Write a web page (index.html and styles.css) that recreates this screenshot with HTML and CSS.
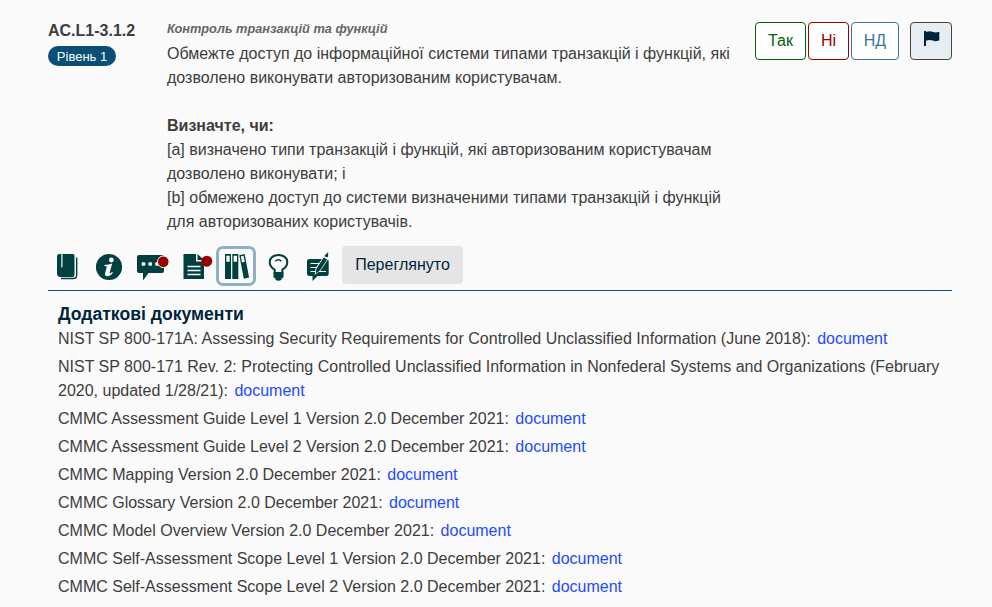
FILE: index.html
```html
<!DOCTYPE html>
<html lang="uk">
<head>
<meta charset="utf-8">
<title>AC.L1-3.1.2</title>
<link rel="stylesheet" href="styles.css">
</head>
<body>
<main class="question">
  <header class="top">
    <div class="ident">
      <div class="code">AC.L1-3.1.2</div>
      <span class="level">Рівень 1</span>
    </div>
    <div class="text">
      <div class="subtitle">Контроль транзакцій та функцій</div>
      <p>Обмежте доступ до інформаційної системи типами транзакцій і функцій, які<br>дозволено виконувати авторизованим користувачам.</p>
      <p class="determine"><b>Визначте, чи:</b><br>[a] визначено типи транзакцій і функцій, які авторизованим користувачам<br>дозволено виконувати; і<br>[b] обмежено доступ до системи визначеними типами транзакцій і функцій<br>для авторизованих користувачів.</p>
    </div>
    <div class="answers">
      <button class="answer yes">Так</button>
      <button class="answer no">Ні</button>
      <button class="answer na">НД</button>
      <button class="answer flag" aria-label="Позначити"><svg width="18" height="18" viewBox="0 0 18 18"><path d="M1 1h2v15H1zM3 2C5.500.8 8 1.200 10 2c2 .8 4 .5 6.300-.3v8.600c-2.500 1-4.500 1.100-6.500.3-2-.8-4.300-.8-6.800.1z"/></svg></button>
    </div>
  </header>

  <nav class="tools">
    <button class="tool"><svg viewBox="0 0 40 40"><path d="M11.500 8H13.300v14l1.200-1.200V8H25q1.500 0 1.500 1.500v19.500q0 2-2 2H12.500Q9 31 9 27.500v-17Q9 8 11.500 8z"/><path class="line" d="M28.700 11.500V29q0 3.500-3.500 3.500H13"/></svg></button>
    <button class="tool"><svg viewBox="0 0 40 40"><circle cx="19" cy="21" r="13.100"/><circle class="cut" cx="21.300" cy="14" r="2.400"/><path class="cut" d="M14.500 19q4-.3 7.700-1.500l-2.400 8.700q-.4 1.700.6 1.300.8-.4 1.700-1.700l.8.600q-2.500 4-5.700 3.800-2.900-.2-2.100-3.200l1.700-6.200q.2-.9-2.500-.9z"/></svg></button>
    <button class="tool"><svg viewBox="0 0 40 40"><path d="M7 9h23q2 0 2 2v14q0 2-2 2H16.500L11 34.500V27H7q-2 0-2-2V11q0-2 2-2z"/><g class="cut"><circle cx="11.500" cy="18" r="2"/><circle cx="18.200" cy="18" r="2"/><circle cx="25" cy="18" r="2"/></g><circle class="dot ring" cx="31.300" cy="15.800" r="5.800"/></svg></button>
    <button class="tool"><svg viewBox="0 0 40 40"><path d="M9.500 8H22v7.500h8V33H9.500zM23.500 8l6.500 6h-6.500z"/><path class="cutline" d="M13.500 20.500h13M13.500 24.500h13M13.500 28.500h13"/><circle class="dot" cx="32.800" cy="15.200" r="5.500"/></svg></button>
    <button class="tool active"><svg viewBox="0 0 40 40"><path d="M9 8h6v25H9zM16.300 8h6v25h-6zM23.300 9.200l5.300-1.300 4.500 23.600-5.300 1.300z"/><path class="cut" d="M10.300 9.800h3.400v6h-3.400zM17.600 9.800H21v6h-3.400zM24.800 10.500l2.800-.7 1.200 5.900-2.800.7z"/></svg></button>
    <button class="tool"><svg viewBox="0 0 40 40"><path class="bulb" d="M16.700 27.200v-3.500q-5-3-5-7.700c0-4.200 4-7.100 8.800-7.100s8.800 2.900 8.800 7.100q0 4.700-5 7.700v3.500z"/><path class="thin" d="M17.300 15.200q3-2.800 6.200 0"/><path d="M15.500 26h10v5.500l-2 1v1.200q-3 2.300-6 0v-1.200l-2-1z"/></svg></button>
    <button class="tool"><svg viewBox="0 0 40 40"><path d="M9.500 13h16.700q2.500 0 2.500 2.500v12q0 2.500-2.500 2.500H17.500L12.500 35v-5h-3Q7 30 7 27.500v-12Q7 13 9.500 13z"/><path class="textline" d="M10.500 17.500H22M10.500 21.500h10M10.500 25.500H26"/><path class="pencil-edge" d="M25 10 16.500 22l-.8 5 4.200-2.800L28 12z"/><path d="m23.800 11.500 3.300 2-7.400 11.200-4.100 2.800.9-5zM24.500 10.300l1.400-2.200 1-.4.600-1.300 1 .7-.6 1.200.3 1.600-1 1.700z"/></svg></button>
    <button class="viewed">Переглянуто</button>
  </nav>

  <section class="docs">
    <h2>Додаткові документи</h2>
    <ul>
      <li>NIST SP 800-171A: Assessing Security Requirements for Controlled Unclassified Information (June 2018): <a>document</a></li>
      <li>NIST SP 800-171 Rev. 2: Protecting Controlled Unclassified Information in Nonfederal Systems and Organizations (February 2020, updated 1/28/21): <a>document</a></li>
      <li>CMMC Assessment Guide Level 1 Version 2.0 December 2021: <a>document</a></li>
      <li>CMMC Assessment Guide Level 2 Version 2.0 December 2021: <a>document</a></li>
      <li>CMMC Mapping Version 2.0 December 2021: <a>document</a></li>
      <li>CMMC Glossary Version 2.0 December 2021: <a>document</a></li>
      <li>CMMC Model Overview Version 2.0 December 2021: <a>document</a></li>
      <li>CMMC Self-Assessment Scope Level 1 Version 2.0 December 2021: <a>document</a></li>
      <li>CMMC Self-Assessment Scope Level 2 Version 2.0 December 2021: <a>document</a></li>
    </ul>
  </section>
</main>
</body>
</html>
```
FILE: styles.css
```css
* { box-sizing: border-box; }
body {
  margin: 0;
  background: #fafafa;
  color: #3d3d3d;
  font: 16px/24px "Liberation Sans", Arial, sans-serif;
}
button { font: inherit; margin: 0; }
.question { padding: 18px 40px 0 48px; }
.top { display: flex; height: 228px; }
.ident { width: 119px; }
.code { height: 24px; font-weight: bold; line-height: 26px; }
.level {
  display: block;
  width: 68px;
  height: 20px;
  margin-top: 4px;
  border-radius: 10px;
  background: #0b4f75;
  color: #fff;
  font-size: 13px;
  line-height: 21px;
  text-align: center;
}
.text { width: 588px; white-space: nowrap; }
.subtitle {
  height: 24px;
  color: #666;
  font-size: 12.8px;
  font-style: italic;
  font-weight: bold;
  line-height: 21px;
}
p { margin: 0; }
.determine { margin-top: 24px; }
.answers { display: flex; align-items: flex-start; gap: 2px; padding-top: 4px; }
.answer {
  height: 38px;
  padding: 0;
  border: 1px solid;
  border-radius: 4px;
  background: #fff;
}
.yes { width: 51px; color: #006400; }
.no { width: 41px; color: #900; }
.na { width: 48px; color: #37779b; }
.flag {
  width: 42px;
  margin-left: 9px;
  padding: 0 0 0 12px;
  border-color: #444;
  background: #e7eef2;
  text-align: left;
}
.flag svg { display: block; fill: #002539; margin-bottom: 4px; }
.tools {
  display: flex;
  gap: 2px;
  height: 45px;
  border-bottom: 1px solid #0b4f75;
}
.tool {
  width: 40px;
  height: 40px;
  padding: 0;
  border: 0;
  border-radius: 7px;
  background: transparent;
}
.tool svg { display: block; width: 40px; height: 40px; fill: #00403f; }
.active { box-shadow: inset 0 0 0 3px #8fb1c3; }
.tool .cut { fill: #fafafa; }
.cutline { stroke: #fafafa; stroke-width: 1.6; }
.textline { stroke: #fafafa; stroke-width: 1.2; }
.tool .line { fill: none; stroke: #00403f; stroke-width: 1.4; }
.tool .bulb { fill: none; stroke: #00403f; stroke-width: 2; }
.tool .thin { fill: none; stroke: #00403f; stroke-width: 1.5; }
.tool .dot { fill: #900; }
.ring { stroke: #fafafa; stroke-width: 1; }
.pencil-edge { fill: #fafafa; stroke: #fafafa; stroke-width: 1.6; }
.viewed {
  width: 121px;
  height: 38px;
  padding: 0;
  border: 0;
  border-radius: 4px;
  background: #e5e5e5;
  color: #002539;
}
.docs { padding: 11px 10px 0; }
h2 { margin: 0; color: #002539; font-size: 17.6px; line-height: 25px; }
ul { margin: 0; padding: 0; list-style: none; }
li { margin-bottom: 4px; }
a { margin-left: 2px; color: #1f4bff; }
```
